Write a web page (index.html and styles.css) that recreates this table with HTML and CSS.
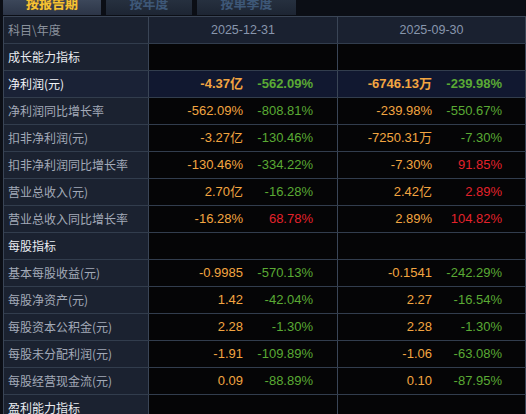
FILE: index.html
```html
<!DOCTYPE html>
<html lang="zh">
<head>
<meta charset="utf-8">
<title>财务指标</title>
<link rel="stylesheet" href="styles.css">
</head>
<body>
<div class="page">
  <div class="tabs">
    <div class="tab active">按报告期</div>
    <div class="tab">按年度</div>
    <div class="tab wide">按单季度</div>
  </div>
  <div class="table">
    <div class="row head">
      <div class="lbl">科目\年度</div>
      <div class="cell date">2025-12-31</div>
      <div class="cell date">2025-09-30</div>
    </div>
    <div class="row sec">
      <div class="lbl">成长能力指标</div>
      <div class="cell"></div>
      <div class="cell"></div>
    </div>
    <div class="row hl">
      <div class="lbl">净利润(元)</div>
      <div class="cell"><span class="o">-4.37亿</span><span class="g">-562.09%</span></div>
      <div class="cell"><span class="o">-6746.13万</span><span class="g">-239.98%</span></div>
    </div>
    <div class="row">
      <div class="lbl">净利润同比增长率</div>
      <div class="cell"><span class="o">-562.09%</span><span class="g">-808.81%</span></div>
      <div class="cell"><span class="o">-239.98%</span><span class="g">-550.67%</span></div>
    </div>
    <div class="row">
      <div class="lbl">扣非净利润(元)</div>
      <div class="cell"><span class="o">-3.27亿</span><span class="g">-130.46%</span></div>
      <div class="cell"><span class="o">-7250.31万</span><span class="g">-7.30%</span></div>
    </div>
    <div class="row">
      <div class="lbl">扣非净利润同比增长率</div>
      <div class="cell"><span class="o">-130.46%</span><span class="g">-334.22%</span></div>
      <div class="cell"><span class="o">-7.30%</span><span class="r">91.85%</span></div>
    </div>
    <div class="row">
      <div class="lbl">营业总收入(元)</div>
      <div class="cell"><span class="o">2.70亿</span><span class="g">-16.28%</span></div>
      <div class="cell"><span class="o">2.42亿</span><span class="r">2.89%</span></div>
    </div>
    <div class="row">
      <div class="lbl">营业总收入同比增长率</div>
      <div class="cell"><span class="o">-16.28%</span><span class="r">68.78%</span></div>
      <div class="cell"><span class="o">2.89%</span><span class="r">104.82%</span></div>
    </div>
    <div class="row sec">
      <div class="lbl">每股指标</div>
      <div class="cell"></div>
      <div class="cell"></div>
    </div>
    <div class="row">
      <div class="lbl">基本每股收益(元)</div>
      <div class="cell"><span class="o">-0.9985</span><span class="g">-570.13%</span></div>
      <div class="cell"><span class="o">-0.1541</span><span class="g">-242.29%</span></div>
    </div>
    <div class="row">
      <div class="lbl">每股净资产(元)</div>
      <div class="cell"><span class="o">1.42</span><span class="g">-42.04%</span></div>
      <div class="cell"><span class="o">2.27</span><span class="g">-16.54%</span></div>
    </div>
    <div class="row">
      <div class="lbl">每股资本公积金(元)</div>
      <div class="cell"><span class="o">2.28</span><span class="g">-1.30%</span></div>
      <div class="cell"><span class="o">2.28</span><span class="g">-1.30%</span></div>
    </div>
    <div class="row">
      <div class="lbl">每股未分配利润(元)</div>
      <div class="cell"><span class="o">-1.91</span><span class="g">-109.89%</span></div>
      <div class="cell"><span class="o">-1.06</span><span class="g">-63.08%</span></div>
    </div>
    <div class="row">
      <div class="lbl">每股经营现金流(元)</div>
      <div class="cell"><span class="o">0.09</span><span class="g">-88.89%</span></div>
      <div class="cell"><span class="o">0.10</span><span class="g">-87.95%</span></div>
    </div>
    <div class="row sec">
      <div class="lbl">盈利能力指标</div>
      <div class="cell"></div>
      <div class="cell"></div>
    </div>
  </div>
</div>
</body>
</html>
```
FILE: styles.css
```css
* { box-sizing: border-box; }
html, body {
  margin: 0;
  padding: 0;
  background: #0b0e15;
  overflow: hidden;
  height: 414px;
}
.page {
  padding-left: 3px;
  font-family: "Liberation Sans", "Noto Sans CJK SC", sans-serif;
}
.tabs {
  display: flex;
  height: 16px;
  gap: 5px;
  overflow: hidden;
}
.tab {
  width: 86px;
  height: 15px;
  background: linear-gradient(#26303f, #1d2533);
  color: #3e5878;
  font-family: "Noto Sans CJK SC", sans-serif;
  font-weight: 700;
  font-size: 13px;
  line-height: 6px;
  text-align: center;
}
.tab.active {
  width: 98px;
  background: linear-gradient(#3c475a, #2c3547);
  color: #f6c436;
  text-shadow: 0 0 1px #8a5a10;
}
.tab.wide { width: 99px; }
.table {
  border-top: 1px solid #3a4556;
  border-left: 1px solid #3a4556;
}
.row {
  display: grid;
  grid-template-columns: 145px 189px 1fr;
  height: 27px;
  border-bottom: 1px solid #323d4d;
}
.lbl {
  background: #1b2230;
  border-right: 1px solid #3a4556;
  color: #a3aab8;
  font-family: "Noto Sans CJK SC", sans-serif;
  font-size: 12px;
  line-height: 26px;
  padding-left: 4px;
  white-space: nowrap;
}
.cell {
  background: #050506;
  border-right: 1px solid #3a4556;
  display: grid;
  grid-template-columns: 94px 70px;
  font-size: 13px;
  line-height: 26px;
  white-space: nowrap;
}
.cell span { text-align: right; }
.head .lbl { color: #8a919c; }
.head .cell {
  background: #1a2130;
  display: block;
  text-align: center;
  color: #8896ad;
  font-size: 12.5px;
}
.sec .lbl { color: #e9ecf0; }
.hl .lbl { background: #1a2236; color: #f2f4f8; }
.hl .cell { background: #111830; }
.hl .cell span { font-weight: 700; }
.o { color: #f3a541; }
.g { color: #5aaa34; }
.r { color: #e3222b; }
```
